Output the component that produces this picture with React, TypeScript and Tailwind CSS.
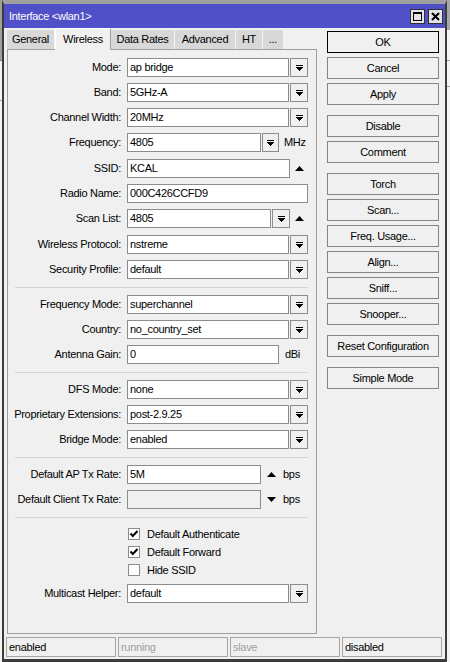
import React, { FunctionComponent, ReactNode } from 'react'

// small drawings used by the form
const DropIcon = () => (
  <svg width="7" height="6" viewBox="0 0 7 6" shapeRendering="crispEdges">
    <rect x="0" y="0" width="7" height="1" fill="#000" />
    <path d="M0 2H7L3.5 6Z" fill="#000" />
  </svg>
)

const UpArrow = () => (
  <svg width="9" height="5" viewBox="0 0 9 5">
    <path d="M0 5H9L4.5 0Z" fill="#000" />
  </svg>
)

const DownArrow = () => (
  <svg width="9" height="5" viewBox="0 0 9 5">
    <path d="M0 0H9L4.5 5Z" fill="#000" />
  </svg>
)

type TextBoxProps = {
  w: string, value?: string, disabled?: boolean
}

const TextBox: FunctionComponent<TextBoxProps> = ({ w, value, disabled }) => {
  return (
    <div className={`${w} h-[19px] border border-[#8c8c8c] ${disabled ? 'bg-[#f0f0f0]' : 'bg-white'} flex items-center pl-[2px] whitespace-nowrap overflow-hidden`}>
      {value}
    </div>
  )
}

const DropBtn: FunctionComponent<{ w?: string }> = ({ w = 'w-[18px]' }) => (
  <div className={`${w} h-[19px] ml-[1px] border border-[#8c8c8c] bg-[#f0f0f0] flex items-center justify-center`}>
    <DropIcon />
  </div>
)

type FieldProps = {
  label: string, children: ReactNode, extra?: string
}

const Field: FunctionComponent<FieldProps> = ({ label, children, extra = '' }) => {
  return (
    <div className={`flex items-center h-[25px] ${extra}`}>
      <div className="w-[113px] text-right whitespace-nowrap">{label}</div>
      <div className="ml-[6px] flex items-center">{children}</div>
    </div>
  )
}

const Separator = () => (
  <div className="h-[10px] pt-[5px] pl-[7px]">
    <div className="w-[293px] h-[1px] bg-[#d4d4d4]" />
  </div>
)

const Check: FunctionComponent<{ label: string, checked?: boolean, h: string }> = ({ label, checked, h }) => (
  <div className={`flex items-center ${h} pl-[120px]`}>
    <div className="w-[12px] h-[12px] border border-[#8c8c8c] bg-white flex items-center justify-center">
      {checked && (
        <svg width="10" height="10" viewBox="0 0 10 10">
          <polyline points="1.5,4.5 3.8,7 8.5,2" fill="none" stroke="#000" strokeWidth="2" />
        </svg>
      )}
    </div>
    <span className="ml-[7px]">{label}</span>
  </div>
)

const SideButton: FunctionComponent<{ text: string, main?: boolean, extra?: string }> = ({ text, main, extra = '' }) => (
  <div className={`h-[22px] flex items-center justify-center bg-[#f0f0f0] border ${main ? 'border-black' : 'border-[#858585]'} ${extra}`}>
    {text}
  </div>
)

const tabs = [
  { name: 'General', w: 'w-[48px]' },
  { name: 'Wireless', w: 'w-[56px]', active: true },
  { name: 'Data Rates', w: 'w-[64px]' },
  { name: 'Advanced', w: 'w-[61px]' },
  { name: 'HT', w: 'w-[27px]' },
  { name: '...', w: 'w-[21px]' },
]

const App: FunctionComponent = () => {
  return (
    <div className="w-[450px] h-[662px] flex overflow-hidden bg-[#f4f4f4] text-[11px] tracking-[-0.3px] text-black font-['Liberation_Sans',Arial,sans-serif]">

      {/* desktop behind the window */}
      <div className="w-[2px] flex flex-col">
        <div className="h-[60px] bg-[#a0a0a0]" />
        <div className="h-[1px] bg-[#808080]" />
        <div className="h-[39px]" />
        <div className="h-[1px] bg-[#a0a0a0]" />
      </div>

      <div className="w-[445px] h-[662px] flex flex-col bg-[#f0f0f0] border-x-2 border-[#3c3c3c] border-t-[4px] border-t-[#a0a0a0] border-b-[3px] border-b-[#3c3c3c]">

        {/* title bar */}
        <div className="h-[24px] bg-[#5050c8] flex items-center pl-[5px] pr-[2px]">
          <span className="text-white">Interface &lt;wlan1&gt;</span>
          <div className="ml-auto flex gap-[3px]">
            <div className="w-[15px] h-[15px] bg-[#e4e4e4] border border-[#303030] flex items-center justify-center">
              <svg width="9" height="9" viewBox="0 0 9 9" shapeRendering="crispEdges">
                <rect x="0.5" y="0.5" width="8" height="8" fill="none" stroke="#000" />
                <rect x="0" y="0" width="9" height="2" fill="#000" />
              </svg>
            </div>
            <div className="w-[15px] h-[15px] bg-[#e4e4e4] border border-[#303030] flex items-center justify-center">
              <svg width="9" height="9" viewBox="0 0 9 9">
                <path d="M1 1L8 8M8 1L1 8" stroke="#000" strokeWidth="2" />
              </svg>
            </div>
          </div>
        </div>

        <div className="flex">
          {/* tabs and form */}
          <div className="ml-[3px] w-[310px] flex flex-col">
            <div className="h-[21px] flex items-end">
              {tabs.map((tab) => (
                <div key={tab.name} className={`${tab.w} flex items-center justify-center ${tab.active ? 'h-[22px] -mb-[1px] bg-[#f0f0f0] border-l border-t border-white border-r border-r-[#a0a0a0] relative z-10' : 'h-[19px] bg-[#d8d8d8] border-r border-[#f4f4f4]'}`}>
                  {tab.name}
                </div>
              ))}
            </div>

            <div className="h-[585px] border border-[#a0a0a0] pt-[5px]">
              <Field label="Mode:"><TextBox w="w-[162px]" value="ap bridge" /><DropBtn /></Field>
              <Field label="Band:"><TextBox w="w-[162px]" value="5GHz-A" /><DropBtn /></Field>
              <Field label="Channel Width:"><TextBox w="w-[162px]" value="20MHz" /><DropBtn /></Field>
              <Field label="Frequency:">
                <TextBox w="w-[134px]" value="4805" /><DropBtn w="w-[17px]" />
                <span className="ml-[5px]">MHz</span>
              </Field>
              <Field label="SSID:" extra="mt-[1px]">
                <TextBox w="w-[163px]" value="KCAL" />
                <span className="ml-[5px] flex"><UpArrow /></span>
              </Field>
              <Field label="Radio Name:"><TextBox w="w-[181px]" value="000C426CCFD9" /></Field>
              <Field label="Scan List:">
                <TextBox w="w-[144px]" value="4805" /><DropBtn />
                <span className="ml-[5px] flex"><UpArrow /></span>
              </Field>
              <Field label="Wireless Protocol:" extra="mt-[1px]"><TextBox w="w-[162px]" value="nstreme" /><DropBtn /></Field>
              <Field label="Security Profile:"><TextBox w="w-[162px]" value="default" /><DropBtn /></Field>

              <Separator />

              <Field label="Frequency Mode:"><TextBox w="w-[162px]" value="superchannel" /><DropBtn /></Field>
              <Field label="Country:"><TextBox w="w-[162px]" value="no_country_set" /><DropBtn /></Field>
              <Field label="Antenna Gain:">
                <TextBox w="w-[152px]" value="0" />
                <span className="ml-[6px]">dBi</span>
              </Field>

              <Separator />

              <Field label="DFS Mode:"><TextBox w="w-[162px]" value="none" /><DropBtn /></Field>
              <Field label="Proprietary Extensions:"><TextBox w="w-[162px]" value="post-2.9.25" /><DropBtn /></Field>
              <Field label="Bridge Mode:"><TextBox w="w-[162px]" value="enabled" /><DropBtn /></Field>

              <Separator />

              <Field label="Default AP Tx Rate:">
                <TextBox w="w-[134px]" value="5M" />
                <span className="ml-[6px] flex"><UpArrow /></span>
                <span className="ml-[7px]">bps</span>
              </Field>
              <Field label="Default Client Tx Rate:">
                <TextBox w="w-[134px]" disabled />
                <span className="ml-[6px] flex"><DownArrow /></span>
                <span className="ml-[7px]">bps</span>
              </Field>

              <Separator />

              <div className="pt-[3px]">
                <Check label="Default Authenticate" checked h="h-[18px]" />
                <Check label="Default Forward" checked h="h-[18px]" />
                <Check label="Hide SSID" h="h-[18px]" />
              </div>
              <Field label="Multicast Helper:" extra="mt-[2px]"><TextBox w="w-[162px]" value="default" /><DropBtn /></Field>
            </div>
          </div>

          {/* buttons on the right */}
          <div className="ml-[10px] w-[112px] pt-[3px] flex flex-col gap-[4px]">
            <SideButton text="OK" main />
            <SideButton text="Cancel" />
            <SideButton text="Apply" />
            <SideButton text="Disable" extra="mt-[6px]" />
            <SideButton text="Comment" />
            <SideButton text="Torch" extra="mt-[6px]" />
            <SideButton text="Scan..." />
            <SideButton text="Freq. Usage..." />
            <SideButton text="Align..." />
            <SideButton text="Sniff..." />
            <SideButton text="Snooper..." />
            <SideButton text="Reset Configuration" extra="mt-[6px]" />
            <SideButton text="Simple Mode" extra="mt-[6px]" />
          </div>
        </div>

        {/* status bar */}
        <div className="mt-[3px] pl-[2px] flex gap-[2px]">
          <div className="w-[110px] h-[20px] border border-[#a5a5a5] flex items-center pl-[2px]">enabled</div>
          <div className="w-[110px] h-[20px] border border-[#a5a5a5] flex items-center pl-[2px] text-[#a0a0a0]">running</div>
          <div className="w-[110px] h-[20px] border border-[#a5a5a5] flex items-center pl-[2px] text-[#a0a0a0]">slave</div>
          <div className="w-[100px] h-[20px] border border-[#a5a5a5] flex items-center pl-[2px]">disabled</div>
        </div>
      </div>

      <div className="w-[3px] flex flex-col">
        <div className="h-[30px] bg-[#a8a8a8]" />
        <div className="h-[30px]" />
        <div className="h-[1px] bg-[#a0a0a0]" />
        <div className="h-[25px]" />
        <div className="h-[1px] bg-[#a0a0a0]" />
      </div>
    </div>
  )
}

export default App
